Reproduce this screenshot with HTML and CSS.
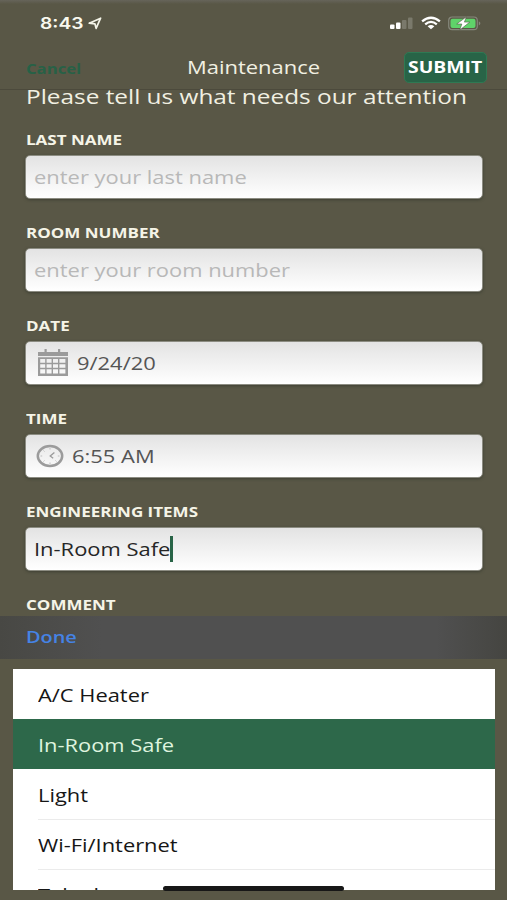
FILE: index.html
```html
<!DOCTYPE html>
<html lang="en">
<head>
<meta charset="utf-8">
<title>Maintenance</title>
<link rel="stylesheet" href="styles.css">
</head>
<body>
<main class="screen">
  <header class="top">
    <div class="status">
      <div class="clock"><span class="wide time">8:43</span>
        <svg width="14" height="13" viewBox="0 0 14 13"><path d="M1.2 6.2 12.6 1.2 8.1 11.4 6.9 6.8Z" fill="none" stroke="#f4f4e8" stroke-width="1.7" stroke-linejoin="round"/></svg>
      </div>
      <div class="indicators">
        <svg width="24" height="14" viewBox="0 0 24 14"><g fill="#fff"><rect x="0" y="8.5" width="4.5" height="4.5" rx="1"/><rect x="6" y="6.5" width="4.5" height="6.5" rx="1"/><g opacity=".2"><rect x="12" y="4" width="4.5" height="9" rx="1"/><rect x="18" y="1.5" width="4.5" height="11.5" rx="1"/></g></g></svg>
        <svg class="wifi" width="20" height="14" viewBox="0 0 20 14"><g fill="none" stroke="#fff" stroke-width="2.3"><path d="M1.1 5.4Q10-1.8 18.9 5.4M4.2 8.3Q10 3.5 15.8 8.3"/></g><path d="M6.6 10.2Q10 7.8 13.4 10.2L10 13.2Z" fill="#fff"/></svg>
        <svg class="battery" width="34" height="15" viewBox="0 0 34 15"><rect x=".7" y="1" width="28.6" height="12.7" rx="3.5" fill="none" stroke="#85877b" stroke-width="1.2"/><rect x="2.5" y="2.7" width="25" height="9.3" rx="2" fill="#5fd36a"/><path d="M30.8 5.2v4.2q3.2-2.1 0-4.2" fill="#85877b"/><path d="M18.4.8 8.7 8h5.1l-2 6 10-7.9h-5.4Z" fill="#fff" stroke="#565746" stroke-width=".6"/></svg>
      </div>
    </div>
    <nav class="nav">
      <span class="wide cancel">Cancel</span>
      <h1 class="wide title">Maintenance</h1>
      <button class="submit"><span class="wide">SUBMIT</span></button>
    </nav>
  </header>
  <form class="form">
    <p class="wide intro">Please tell us what needs our attention</p>
    <section class="field"><label class="wide">LAST NAME</label><div class="input"><span class="wide hint">enter your last name</span></div></section>
    <section class="field"><label class="wide">ROOM NUMBER</label><div class="input"><span class="wide hint">enter your room number</span></div></section>
    <section class="field"><label class="wide">DATE</label><div class="input date">
      <svg width="30" height="28" viewBox="0 0 30 28"><g fill="#9b9b9b"><path d="M0 3h30v4H0zM6.5 0h2.2v4H6.5zM20 0h2.2v4H20z"/><path fill-rule="evenodd" d="M0 8.3h30V27H0zM2.2 10v3.8h5V10zm6.4 0v3.8h5V10zm6.4 0v3.8h5V10zm6.4 0v3.8h6V10zM2.2 15.2v3.6h5v-3.6zm6.4 0v3.6h5v-3.6zm6.4 0v3.6h5v-3.6zm6.4 0v3.6h6v-3.6zM2.2 20.2v4.4h5v-4.4zm6.4 0v4.4h5v-4.4zm6.4 0v4.4h5v-4.4zm6.4 0v4.4h6v-4.4z"/></g></svg>
      <span class="wide">9/24/20</span></div></section>
    <section class="field"><label class="wide">TIME</label><div class="input hour">
      <svg width="28" height="24" viewBox="0 0 28 24"><ellipse cx="14" cy="12" rx="12.2" ry="10" fill="none" stroke="#9b9b9b" stroke-width="2.5"/><path d="M18.4 8.4 14.2 12l3 2.2" fill="none" stroke="#9b9b9b" stroke-width="1.3"/><path d="M14 4v1.5M14 18.5V20M4.5 12h1.7M21.8 12h1.7M7.5 6.5l1 1M19.5 16.5l1 1M7.5 17.5l1-1" fill="none" stroke="#bdbdbd" stroke-width="1"/></svg>
      <span class="wide">6:55 AM</span></div></section>
    <section class="field"><label class="wide">ENGINEERING ITEMS</label><div class="input active"><span class="wide">In-Room Safe</span><i class="caret"></i></div></section>
    <section class="field"><label class="wide">COMMENT</label></section>
  </form>
  <div class="picker">
    <div class="toolbar"><span class="wide">Done</span></div>
    <ul class="options">
      <li><span class="wide">A/C Heater</span></li>
      <li class="selected"><span class="wide">In-Room Safe</span></li>
      <li><span class="wide">Light</span></li>
      <li><span class="wide">Wi-Fi/Internet</span></li>
      <li><span class="wide">Telephone</span></li>
    </ul>
    <div class="home"></div>
  </div>
</main>
</body>
</html>
```
FILE: styles.css
```css
* { box-sizing: border-box; }
body { margin: 0; background: #595746; font-family: "Open Sans", sans-serif; }
.screen { width: 507px; height: 900px; overflow: hidden; display: flex; flex-direction: column; background: linear-gradient(#66645a 0, #595746 4px); }
.wide { display: inline-block; white-space: nowrap; transform: scaleX(1.2); transform-origin: left center; }
.top { height: 90px; flex: none; border-bottom: 1px solid #4c4a3c; }
.status { height: 45px; padding: 1px 25px 0 40px; display: flex; justify-content: space-between; align-items: center; color: #f9f9ef; }
.clock { display: flex; align-items: center; }
.time { width: 48px; font: 600 16px/20px Inter, sans-serif; }
.indicators { display: flex; align-items: center; }
.wifi { margin-left: 7px; }
.battery { margin-left: 7px; }
.nav { height: 44px; display: grid; grid-template-columns: 161px 217px 83px; padding-left: 26px; align-items: center; }
.cancel { color: #276146; font-weight: 700; font-size: 14px; transform: scaleX(1.19); padding-top: 2px; }
.title { margin: 0; color: #f1f0e2; font-size: 18px; font-weight: 400; line-height: 26px; transform: scaleX(1.22); }
.submit { height: 31px; width: 83px; padding: 0 0 0 3px; text-align: left; color: #fff; background: #286447; border: 1px solid #2e7953; border-radius: 5px; font: 700 16px/27px "Open Sans", sans-serif; }
.submit .wide { transform: scaleX(1.21); }
.form { height: 526px; flex: none; padding: 0 24px 0 25px; }
.intro { display: block; margin: -7px 0 0 .5px; height: 43px; color: #f1f0e2; font-size: 20px; line-height: 28px; transform: scaleX(1.218); }
.field { height: 93px; padding-top: 5px; }
.field label { display: block; margin-left: .5px; height: 24px; line-height: 18px; font-size: 14px; font-weight: 700; color: #f5f4e7; transform: scaleX(1.215); }
.input { height: 44px; display: flex; align-items: center; padding: 0 8px 1px; border: 1px solid #8c8c82; border-radius: 5px; background: linear-gradient(#e3e3e3, #fff); box-shadow: 0 1px 3px #3e4034; color: #555; font-size: 18.5px; }
.input .wide { transform: scaleX(1.185); }
.input .hint { color: #b8b8b8; }
.input.date { padding-left: 12px; gap: 9px; }
.input.hour { padding-left: 10px; gap: 8px; }
.active { color: #262626; position: relative; }
.caret { position: absolute; left: 144px; top: 8px; width: 3px; height: 26px; background: #286447; }
.picker { height: 284px; position: relative; flex: none; background: #595746; }
.toolbar { height: 43px; padding: 0 0 2px 26px; display: flex; align-items: center; background: linear-gradient(90deg, #484844, #505050 20%, #505050 86%, #454541); color: #4583e5; font-size: 17px; font-weight: 600; }
.toolbar .wide { transform: scaleX(1.17); }
.options { list-style: none; margin: 10px 12px 0 13px; padding: 0; height: 221px; overflow: hidden; background: #fff; }
.options li { height: 50.2px; padding-top: 2px; display: flex; align-items: center; margin-left: 24.5px; border-bottom: 1px solid #ebebeb; font-size: 18px; color: #161616; }
.options li:first-child { border-color: transparent; }
.options .wide { transform: scaleX(1.215); }
.options .selected { margin-left: 0; padding-left: 24.5px; background: #2d684a; color: #dff4df; border-color: #2d684a; }
.home { position: absolute; left: 163px; top: 270px; width: 181px; height: 5px; border-radius: 3px; background: #171717; }
```
